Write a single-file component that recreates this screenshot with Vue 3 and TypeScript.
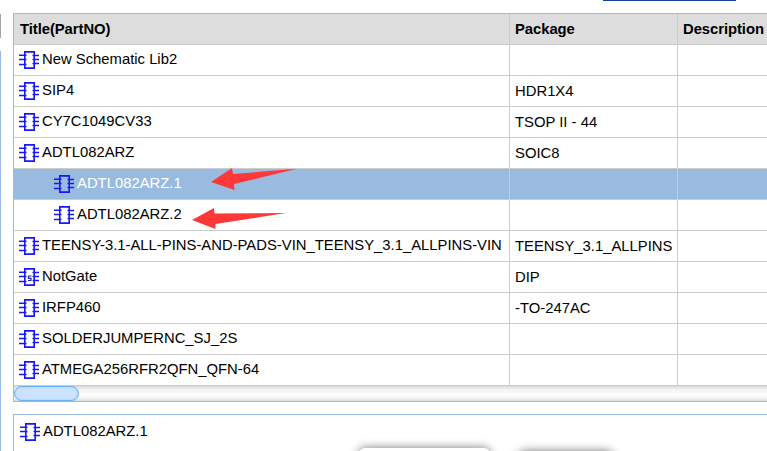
<script setup lang="ts">
interface Part {
  title: string
  pkg?: string
  child?: boolean
  selected?: boolean
  spice?: boolean
}

const parts: Part[] = [
  { title: 'New Schematic Lib2' },
  { title: 'SIP4', pkg: 'HDR1X4' },
  { title: 'CY7C1049CV33', pkg: 'TSOP II - 44' },
  { title: 'ADTL082ARZ', pkg: 'SOIC8' },
  { title: 'ADTL082ARZ.1', child: true, selected: true },
  { title: 'ADTL082ARZ.2', child: true },
  { title: 'TEENSY-3.1-ALL-PINS-AND-PADS-VIN_TEENSY_3.1_ALLPINS-VIN', pkg: 'TEENSY_3.1_ALLPINS' },
  { title: 'NotGate', pkg: 'DIP', spice: true },
  { title: 'IRFP460', pkg: '-TO-247AC' },
  { title: 'SOLDERJUMPERNC_SJ_2S' },
  { title: 'ATMEGA256RFR2QFN_QFN-64' },
]
</script>

<template>
  <div class="page">
    <svg width="0" height="0" class="defs">
      <symbol id="chip" viewBox="0 0 20 18">
        <g fill="none" stroke="#1818f4">
          <path d="M5.8 .9H15.2V17.1H5.8Z" stroke-width="1.6" />
          <path d="M0 4.3H7.500M0 8.600H7.500M0 13.400H7.500M13.500 4.400H20M13.500 8.500H20M13.500 12.500H20" stroke-width="1.500" />
        </g>
      </symbol>
    </svg>
    <div class="side-tab"></div>
    <div class="side-panel"></div>
    <div class="top-bar"></div>

    <section class="grid-panel">
      <div class="row head">
        <div class="cell">Title(PartNO)</div>
        <div class="cell">Package</div>
        <div class="cell">Description</div>
      </div>
      <div v-for="p in parts" :key="p.title" class="row" :class="{ selected: p.selected }">
        <div class="cell title" :class="{ child: p.child }">
          <svg class="chip" width="20" height="18" viewBox="0 0 20 18">
            <use href="#chip" />
            <path v-if="p.spice" d="M12.600 8H9.500V10.300H12V12.500H9" fill="none" stroke="#1f1fa8" stroke-width="1.200" />
          </svg>
          <span>{{ p.title }}</span>
        </div>
        <div class="cell">{{ p.pkg }}</div>
        <div class="cell"></div>
      </div>
      <div class="scroll"><div class="thumb"></div></div>
    </section>

    <section class="detail-panel">
      <svg class="chip" width="20" height="18" viewBox="0 0 20 18"><use href="#chip" /></svg>
      <span>ADTL082ARZ.1</span>
    </section>

    <svg class="arrows" width="767" height="451" viewBox="0 0 767 451">
      <path d="M211 182L232 168L233 174L297 168.800L234 184L234.500 190Z" fill="#fe3838" />
      <path d="M192 220L214 208L214.500 213.500L286 213L215.500 224L215.500 229Z" fill="#fe3838" />
    </svg>
    <div class="popup"></div>
    <div class="popup second"></div>
  </div>
</template>

<style>
body {
  margin: 0;
  background: #fff;
  overflow: hidden;
}
</style>

<style scoped>
.page {
  position: relative;
  box-sizing: border-box;
  height: 451px;
  padding: 13px 0 0 13px;
  overflow: hidden;
  background: #fff;
  color: #000;
  font: 14.84px/20px "Liberation Sans", Arial, sans-serif;
}
.defs,
.arrows {
  position: absolute;
  left: 0;
  top: 0;
}
.side-tab {
  position: absolute;
  left: 0;
  top: 14px;
  width: 1px;
  height: 24px;
  background: #a8a59f;
}
.side-panel {
  position: absolute;
  left: 0;
  top: 51px;
  width: 1px;
  height: 400px;
  background: #99bbe8;
}
.top-bar {
  position: absolute;
  left: 603px;
  top: 0;
  width: 133px;
  height: 1px;
  background: #1b409c;
}
.grid-panel {
  border: 1px solid #99bbdd;
  border-right: 0;
}
.row {
  display: grid;
  grid-template-columns: 496px 168px 1fr;
  height: 31px;
}
.cell {
  box-sizing: border-box;
  min-width: 0;
  padding: 5px 0 0 5px;
  border-right: 1px solid #ccc;
  border-bottom: 1px solid #ccc;
  white-space: nowrap;
}
.cell:last-child {
  border-right: 0;
}
.head {
  background: #ddd;
  font-weight: bold;
  letter-spacing: -0.06px;
}
.head .cell:first-child {
  padding-left: 6px;
}
.title {
  display: flex;
  padding-top: 4px;
}
.title.child {
  padding-left: 40px;
}
.chip {
  flex: none;
  margin: 2px 3px 0 0;
}
.selected {
  background: #99bbdf;
  color: #fff;
}
.scroll {
  height: 15px;
  background: linear-gradient(#d9d9d9, #f3f3f3 25%, #fdfdfd 60%, #f4f4f4 80%, #ddd);
}
.thumb {
  box-sizing: border-box;
  width: 65px;
  height: 15px;
  border: 1px solid #69b1f5;
  border-radius: 8px;
  background: #cce3ff;
  box-shadow: inset 0 0 2px #8cc4fa;
}
.detail-panel {
  display: flex;
  box-sizing: border-box;
  height: 40px;
  margin-top: 12px;
  padding: 6px 0 0 6px;
  border: solid #99bbdd;
  border-width: 1px 0 0 1px;
}
.popup {
  position: absolute;
  left: 359px;
  top: 448px;
  width: 131px;
  height: 30px;
  border-radius: 6px;
  background: #fff;
  box-shadow: 0 0 10px #777;
}
.popup.second {
  left: 519px;
  top: 451px;
  width: 94px;
}
</style>
